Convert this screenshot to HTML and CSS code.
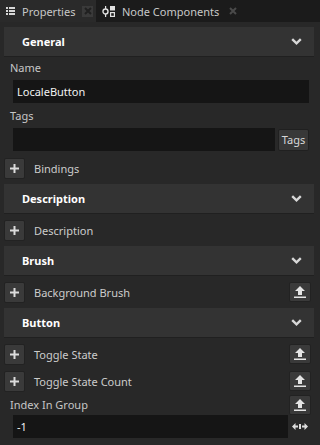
FILE: index.html
```html
<!DOCTYPE html>
<html lang="en">
<head>
  <meta charset="UTF-8" />
  <title>Properties</title>
  <link rel="stylesheet" href="styles.css">
</head>
<body>
  <div class="tabs">
    <div class="tab active">
      <svg class="tab-icon" width="9" height="8" viewBox="0 0 9 8">
        <rect x="0" y="0" width="2" height="2" fill="#d8d8d8"/>
        <rect x="3" y="0" width="6" height="2" fill="#d8d8d8"/>
        <rect x="0" y="3" width="2" height="2" fill="#d8d8d8"/>
        <rect x="3" y="3" width="6" height="2" fill="#d8d8d8"/>
        <rect x="0" y="6" width="2" height="2" fill="#d8d8d8"/>
        <rect x="3" y="6" width="6" height="2" fill="#d8d8d8"/>
      </svg>
      <span class="tab-title">Properties</span>
      <span class="tab-close boxed">
        <svg width="8" height="8" viewBox="0 0 8 8"><path d="M1 1L7 7M7 1L1 7" stroke="#202020" stroke-width="2"/></svg>
      </span>
    </div>
    <div class="tab">
      <svg class="tab-icon" width="13" height="11" viewBox="0 0 13 11">
        <circle cx="3.5" cy="5.5" r="2.5" fill="none" stroke="#e0e0e0" stroke-width="1.4"/>
        <rect x="3" y="0" width="1.2" height="3" fill="#e0e0e0"/>
        <rect x="3" y="8" width="1.2" height="3" fill="#e0e0e0"/>
        <rect x="8" y="0" width="5" height="4.5" fill="#e0e0e0"/>
        <rect x="8.6" y="6.6" width="3.8" height="3.8" fill="none" stroke="#e0e0e0" stroke-width="1.2"/>
      </svg>
      <span class="tab-title">Node Components</span>
      <span class="tab-close">
        <svg width="8" height="8" viewBox="0 0 8 8"><path d="M1 1L7 7M7 1L1 7" stroke="#4a4a4a" stroke-width="2"/></svg>
      </span>
    </div>
  </div>

  <div class="panel">
    <div class="section-header first">
      <span>General</span>
      <svg class="chevron" width="11" height="7" viewBox="0 0 11 7"><path d="M1.2 1.2L5.5 5.3L9.8 1.2" fill="none" stroke="#d8d8d8" stroke-width="2.4"/></svg>
    </div>
    <div class="field-label">Name</div>
    <div class="input">LocaleButton</div>
    <div class="field-label spaced">Tags</div>
    <div class="tags-row">
      <div class="input grow"></div>
      <button class="text-btn">Tags</button>
    </div>
    <div class="row bindings">
      <button class="plus-btn"><svg width="9" height="9" viewBox="0 0 9 9"><path d="M4.5 0V9M0 4.5H9" stroke="#dcdcdc" stroke-width="2"/></svg></button>
      <span class="row-text">Bindings</span>
    </div>

    <div class="section-header">
      <span>Description</span>
      <svg class="chevron" width="11" height="7" viewBox="0 0 11 7"><path d="M1.2 1.2L5.5 5.3L9.8 1.2" fill="none" stroke="#d8d8d8" stroke-width="2.4"/></svg>
    </div>
    <div class="row">
      <button class="plus-btn"><svg width="9" height="9" viewBox="0 0 9 9"><path d="M4.5 0V9M0 4.5H9" stroke="#dcdcdc" stroke-width="2"/></svg></button>
      <span class="row-text">Description</span>
    </div>

    <div class="section-header">
      <span>Brush</span>
      <svg class="chevron" width="11" height="7" viewBox="0 0 11 7"><path d="M1.2 1.2L5.5 5.3L9.8 1.2" fill="none" stroke="#d8d8d8" stroke-width="2.4"/></svg>
    </div>
    <div class="row">
      <button class="plus-btn"><svg width="9" height="9" viewBox="0 0 9 9"><path d="M4.5 0V9M0 4.5H9" stroke="#dcdcdc" stroke-width="2"/></svg></button>
      <span class="row-text">Background Brush</span>
      <button class="up-btn"><svg width="12" height="12" viewBox="0 0 12 12"><path d="M6 0L11 5H8V9H4V5H1Z" fill="#e4e4e4"/><rect x="0" y="10.5" width="12" height="1.5" fill="#e4e4e4"/></svg></button>
    </div>

    <div class="section-header">
      <span>Button</span>
      <svg class="chevron" width="11" height="7" viewBox="0 0 11 7"><path d="M1.2 1.2L5.5 5.3L9.8 1.2" fill="none" stroke="#d8d8d8" stroke-width="2.4"/></svg>
    </div>
    <div class="row">
      <button class="plus-btn"><svg width="9" height="9" viewBox="0 0 9 9"><path d="M4.5 0V9M0 4.5H9" stroke="#dcdcdc" stroke-width="2"/></svg></button>
      <span class="row-text">Toggle State</span>
      <button class="up-btn"><svg width="12" height="12" viewBox="0 0 12 12"><path d="M6 0L11 5H8V9H4V5H1Z" fill="#e4e4e4"/><rect x="0" y="10.5" width="12" height="1.5" fill="#e4e4e4"/></svg></button>
    </div>
    <div class="row tight">
      <button class="plus-btn"><svg width="9" height="9" viewBox="0 0 9 9"><path d="M4.5 0V9M0 4.5H9" stroke="#dcdcdc" stroke-width="2"/></svg></button>
      <span class="row-text">Toggle State Count</span>
      <button class="up-btn"><svg width="12" height="12" viewBox="0 0 12 12"><path d="M6 0L11 5H8V9H4V5H1Z" fill="#e4e4e4"/><rect x="0" y="10.5" width="12" height="1.5" fill="#e4e4e4"/></svg></button>
    </div>
    <div class="label-row">
      <span class="field-label inline">Index In Group</span>
      <button class="up-btn"><svg width="12" height="12" viewBox="0 0 12 12"><path d="M6 0L11 5H8V9H4V5H1Z" fill="#e4e4e4"/><rect x="0" y="10.5" width="12" height="1.5" fill="#e4e4e4"/></svg></button>
    </div>
    <div class="number-row">
      <div class="input grow">-1</div>
      <svg class="drag-icon" width="16" height="7" viewBox="0 0 16 7"><path d="M0 3.5L3.5 0V7Z M16 3.5L12.5 0V7Z" fill="#dcdcdc"/><rect x="3" y="2.5" width="3" height="2" fill="#dcdcdc"/><rect x="10" y="2.5" width="3" height="2" fill="#dcdcdc"/><rect x="7" y="1" width="2" height="5" fill="#dcdcdc"/></svg>
    </div>
  </div>
</body>
</html>
```

FILE: styles.css
```css
* {
  margin: 0;
  padding: 0;
  box-sizing: border-box;
}

body {
  font-family: 'Noto Sans', 'Open Sans', sans-serif;
  font-size: 11px;
  background: #222222;
  color: #cfcfcf;
  width: 320px;
  height: 445px;
  overflow: hidden;
}

/* Tab strip */
.tabs {
  display: flex;
  height: 22px;
  background: #1b1b1b;
}

.tab {
  display: flex;
  align-items: center;
  padding: 0 8px 0 6px;
  color: #c8c8c8;
}

.tab.active {
  background: #2a2a2a;
  width: 96px;
  padding-right: 3px;
}

.tab-icon {
  margin-right: 7px;
  flex-shrink: 0;
}

.tab-title {
  white-space: nowrap;
}

.tab-close {
  display: flex;
  align-items: center;
  justify-content: center;
  width: 11px;
  height: 11px;
  margin-left: 5px;
}

.tab-close.boxed {
  background: #3a3a3a;
  margin-left: auto;
}

.tab:not(.active) .tab-close {
  margin-left: 8px;
}

/* Panel */
.panel {
  background: #282828;
  height: 423px;
  padding: 5px 6px 0 4px;
  display: flex;
  flex-direction: column;
}

.section-header {
  display: flex;
  align-items: center;
  justify-content: space-between;
  height: 30px;
  flex-shrink: 0;
  padding: 0 12px 0 18px;
  background: #333333;
  border-bottom: 1px solid #202020;
  color: #ffffff;
  font-weight: 700;
  margin-top: 5px;
}

.section-header.first {
  margin-top: 0;
}

.field-label {
  height: 16px;
  line-height: 16px;
  padding-left: 6px;
  margin-top: 3px;
  color: #c6c6c6;
}

.field-label.spaced {
  margin-top: 5px;
}

.field-label.inline {
  margin-top: 0;
}

.input {
  height: 23px;
  line-height: 23px;
  background: #151515;
  color: #f2f2f2;
  padding-left: 4px;
  margin: 4px 5px 0 9px;
  flex-shrink: 0;
}

.tags-row {
  display: flex;
  align-items: center;
  margin-top: 4px;
}

.tags-row .input {
  margin: 0 3px 0 9px;
}

.grow {
  flex: 1;
}

.text-btn {
  width: 31px;
  height: 22px;
  margin-right: 5px;
  background: #383838;
  border: 1px solid #202020;
  border-radius: 2px;
  color: #d8d8d8;
  font-family: inherit;
  font-size: 11px;
}

.row {
  display: flex;
  align-items: center;
  height: 22px;
  margin-top: 5px;
  flex-shrink: 0;
}

.row.bindings {
  margin-top: 6px;
}

.row.tight {
  margin-top: 5px;
}

.plus-btn {
  display: flex;
  align-items: center;
  justify-content: center;
  width: 21px;
  height: 21px;
  background: #3a3a3a;
  border: 1px solid #222222;
  border-radius: 2px;
}

.row-text {
  margin-left: 9px;
  color: #cccccc;
  flex: 1;
}

.up-btn {
  display: flex;
  align-items: center;
  justify-content: center;
  width: 22px;
  height: 20px;
  margin-right: 3px;
  background: #3a3a3a;
  border: 1px solid #222222;
  border-radius: 2px;
}

.label-row {
  display: flex;
  align-items: center;
  justify-content: space-between;
  height: 20px;
  margin-top: 3px;
  flex-shrink: 0;
}

.number-row {
  display: flex;
  align-items: center;
  height: 23px;
}

.number-row .input {
  margin: 0 4px 0 9px;
}

.drag-icon {
  margin-right: 6px;
}
```
